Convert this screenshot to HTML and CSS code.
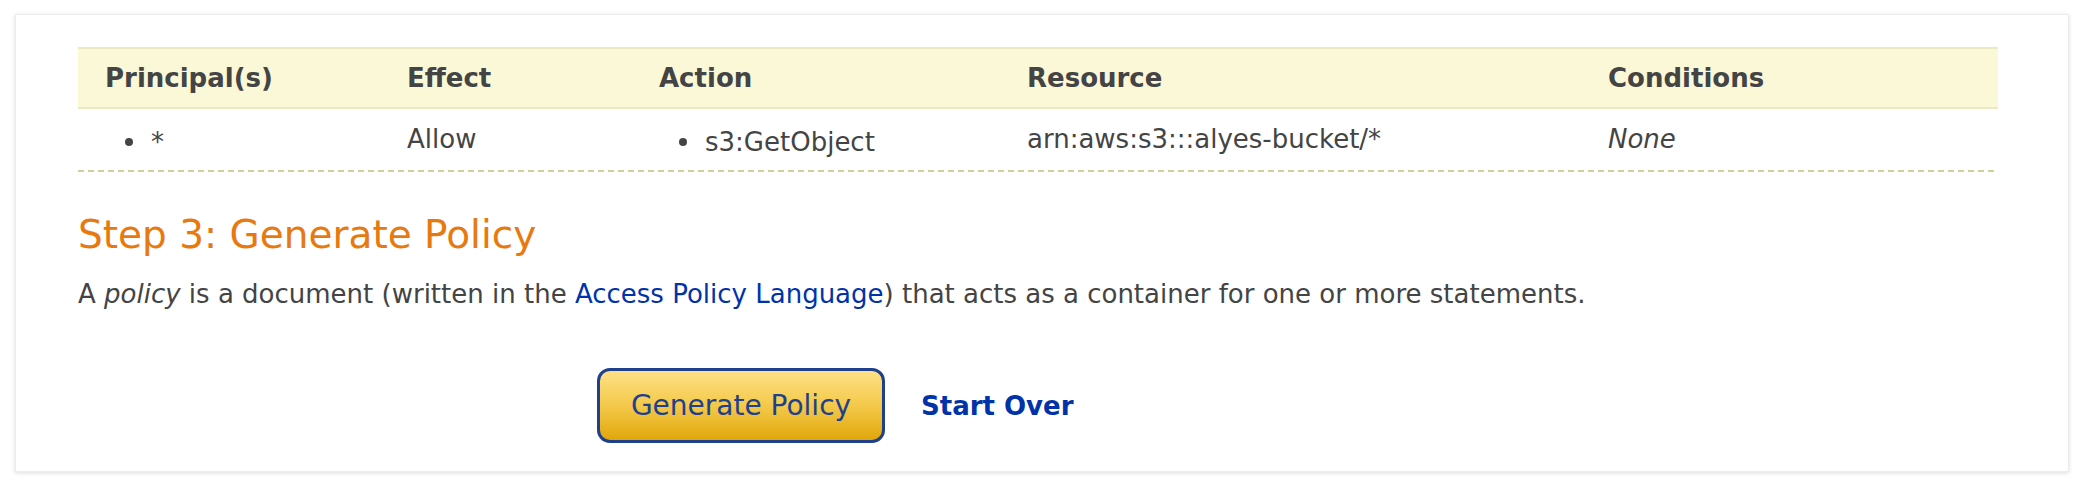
FILE: index.html
```html
<!DOCTYPE html>
<html>
<head>
<meta charset="utf-8">
<link rel="stylesheet" href="styles.css">
</head>
<body>
<div class="card">
  <div class="stmt-table">
    <div class="row head">
      <div class="cell">Principal(s)</div>
      <div class="cell">Effect</div>
      <div class="cell">Action</div>
      <div class="cell">Resource</div>
      <div class="cell">Conditions</div>
    </div>
    <div class="row body">
      <div class="cell"><span class="item"><span class="dot"></span>*</span></div>
      <div class="cell">Allow</div>
      <div class="cell"><span class="item"><span class="dot"></span>s3:GetObject</span></div>
      <div class="cell">arn:aws:s3:::alyes-bucket/*</div>
      <div class="cell"><em>None</em></div>
    </div>
  </div>
  <h2 class="step">Step 3: Generate Policy</h2>
  <p class="desc">A <em>policy</em> is a document (written in the <a href="#" class="link">Access Policy Language</a>) that acts as a container for one or more statements.</p>
  <div class="actions">
    <button class="gen-btn" type="button">Generate Policy</button>
    <a href="#" class="start-over">Start Over</a>
  </div>
</div>
</body>
</html>
```

FILE: styles.css
```css
html, body {
  margin: 0;
  padding: 0;
  background: #ffffff;
}
body {
  font-family: "DejaVu Sans", sans-serif;
  color: #444444;
  padding: 14px 15px 14px 15px;
}
.card {
  box-sizing: border-box;
  height: 458px;
  background: #ffffff;
  border: 1px solid #ececec;
  box-shadow: 0 1px 4px rgba(0, 0, 0, 0.14);
  padding: 32px 70px 0 62px;
}
.stmt-table {
  width: 1920px;
}
.row {
  display: grid;
  grid-template-columns: 302px 252px 368px 581px 417px;
}
.row .cell {
  padding-left: 27px;
  white-space: nowrap;
}
.head {
  background: #fbf8d8;
  border-top: 2px solid #ebe9c4;
  border-bottom: 2px solid #ebe9c4;
  height: 58px;
  align-items: center;
  font-weight: bold;
  font-size: 26px;
  line-height: 30px;
}
.body {
  height: 60px;
  align-items: center;
  font-size: 26px;
  line-height: 30px;
  background-image: repeating-linear-gradient(to right, #cfcf99 0 6px, transparent 6px 10px);
  background-size: 100% 2px;
  background-position: left bottom;
  background-repeat: no-repeat;
  padding-bottom: 3px;
}
.item {
  display: inline-flex;
  align-items: center;
}
.dot {
  display: inline-block;
  width: 8px;
  height: 8px;
  border-radius: 50%;
  background: #444444;
  margin-left: 20px;
  margin-right: 18px;
}
.step {
  margin: 40px 0 0 0;
  font-size: 39px;
  line-height: 46px;
  font-weight: normal;
  color: #e8790f;
}
.desc {
  margin: 20px 0 0 0;
  font-size: 26px;
  line-height: 32px;
}
.link {
  color: #0033aa;
  text-decoration: none;
}
.actions {
  display: flex;
  align-items: center;
  margin-top: 58px;
  padding-left: 519px;
  gap: 36px;
}
.gen-btn {
  box-sizing: border-box;
  width: 288px;
  height: 75px;
  border: 3px solid #1f408c;
  border-radius: 13px;
  background: linear-gradient(to bottom, #fde186 0%, #f4c94a 50%, #e0a70a 100%);
  font-family: "DejaVu Sans", sans-serif;
  font-size: 28px;
  color: #1f408c;
  padding: 0;
  cursor: pointer;
}
.start-over {
  font-weight: bold;
  font-size: 26px;
  color: #0033aa;
  text-decoration: none;
}
```
